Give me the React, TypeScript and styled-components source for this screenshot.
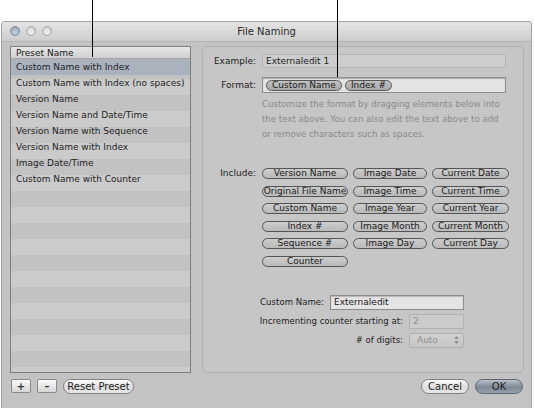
import React from "react";
import styled, { createGlobalStyle } from "styled-components";

const GlobalStyle = createGlobalStyle`
  html, body {
    margin: 0;
    padding: 0;
    background: #ffffff;
  }
  body {
    font-family: "DejaVu Sans", "Liberation Sans", sans-serif;
    font-size: 9px;
    color: #1e1e1e;
  }
`;

const presets = [
  "Custom Name with Index",
  "Custom Name with Index (no spaces)",
  "Version Name",
  "Version Name and Date/Time",
  "Version Name with Sequence",
  "Version Name with Index",
  "Image Date/Time",
  "Custom Name with Counter",
];

const includeTokens = [
  "Version Name", "Image Date", "Current Date",
  "Original File Name", "Image Time", "Current Time",
  "Custom Name", "Image Year", "Current Year",
  "Index #", "Image Month", "Current Month",
  "Sequence #", "Image Day", "Current Day",
  "Counter",
];

const Page = styled.div`
  position: relative;
  width: 534px;
  height: 408px;
  overflow: hidden;
  display: flex;
  flex-direction: column;
  padding-top: 21px;
  box-sizing: border-box;
`;

const Callout = styled.div<{ $x: number; $h: number }>`
  position: absolute;
  top: 0;
  left: ${(p) => p.$x}px;
  width: 1px;
  height: ${(p) => p.$h}px;
  background: #000;
  z-index: 5;
`;

const Window = styled.div`
  margin-left: 1px;
  width: 531px;
  flex: 1;
  display: flex;
  flex-direction: column;
  border: 1px solid #a3a3a3;
  border-bottom: none;
  border-radius: 4px 4px 0 0;
  background: #c3c3c3;
  box-sizing: border-box;
  overflow: hidden;
`;

const TitleBar = styled.div`
  position: relative;
  height: 19px;
  flex: none;
  display: flex;
  align-items: center;
  justify-content: center;
  background: linear-gradient(#e4e4e4, #cdcdcd);
  border-bottom: 1px solid #b5b5b5;
  font-size: 10px;
  color: #2a2a2a;
`;

const Lights = styled.div`
  position: absolute;
  left: 8px;
  top: 4px;
  display: flex;
  gap: 6px;
`;

const Light = styled.span<{ $active?: boolean }>`
  width: 10px;
  height: 10px;
  border-radius: 50%;
  box-sizing: border-box;
  border: 1px solid ${(p) => (p.$active ? "#7d8b9a" : "#a6a6a6")};
  background: ${(p) =>
    p.$active
      ? "radial-gradient(circle at 50% 70%, #c7d2de, #8f9cab)"
      : "radial-gradient(circle at 50% 70%, #f2f2f2, #c9c9c9)"};
`;

const Body = styled.div`
  flex: 1;
  display: flex;
  flex-direction: column;
  padding: 4px 8px 0 8px;
`;

const Content = styled.div`
  display: flex;
  gap: 11px;
  height: 327px;
`;

const List = styled.div`
  width: 181px;
  flex: none;
  border: 1px solid #7e7e7e;
  box-sizing: border-box;
  display: flex;
  flex-direction: column;
  overflow: hidden;
  font-size: 9px;
  background: repeating-linear-gradient(
    #cbcbcb 0px,
    #cbcbcb 16px,
    #c2c2c2 16px,
    #c2c2c2 32px
  );
`;

const ListHeader = styled.div`
  height: 11px;
  flex: none;
  padding-left: 5px;
  display: flex;
  align-items: center;
  background: linear-gradient(#e6e6e6, #d0d0d0);
  border-bottom: 1px solid #a6a6a6;
  color: #1a1a1a;
`;

const ListRows = styled.div`
  flex: 1;
  display: flex;
  flex-direction: column;
`;

const ListRow = styled.div<{ $selected?: boolean }>`
  height: 16px;
  flex: none;
  display: flex;
  align-items: center;
  padding-left: 5px;
  white-space: nowrap;
  background: ${(p) => (p.$selected ? "#aab2bd" : "transparent")};
`;

const Panel = styled.div`
  width: 322px;
  flex: none;
  box-sizing: border-box;
  border: 1px solid #b0b0b0;
  border-radius: 5px;
  background: #c6c6c6;
  padding-top: 7px;
  display: flex;
  flex-direction: column;
`;

const FormRow = styled.div<{ $mt?: number }>`
  display: grid;
  grid-template-columns: 53px 244px;
  column-gap: 6px;
  align-items: center;
  margin-top: ${(p) => p.$mt ?? 0}px;
`;

const Label = styled.div`
  text-align: right;
  white-space: nowrap;
`;

const SmallLabel = styled(Label)`
  font-size: 8.6px;
`;

const Field = styled.div<{ $light?: boolean }>`
  height: 14px;
  box-sizing: border-box;
  border: 1px solid ${(p) => (p.$light ? "#8f8f8f" : "#b4b4b4")};
  background: ${(p) => (p.$light ? "#e3e3e3" : "#cdcdcd")};
  border-radius: ${(p) => (p.$light ? 0 : 2)}px;
  display: flex;
  align-items: center;
  padding-left: 3px;
  gap: 3px;
`;

const FormatField = styled(Field)`
  height: 16px;
  box-shadow: inset 0 1px 1px rgba(0, 0, 0, 0.25);
`;

const Token = styled.span<{ $dark?: boolean }>`
  height: 11px;
  box-sizing: border-box;
  display: inline-flex;
  align-items: center;
  justify-content: center;
  padding: 0 5px;
  border: 1px solid #555;
  border-radius: 6px;
  background: ${(p) =>
    p.$dark ? "linear-gradient(#c2c2c2, #a9a9a9)" : "linear-gradient(#cdcdcd, #b9b9b9)"};
  white-space: nowrap;
  color: #1a1a1a;
  line-height: 1;
`;

const Help = styled.div`
  grid-column: 2;
  color: #8a8a8a;
  line-height: 15px;
  font-size: 8.6px;
  white-space: nowrap;
`;

const IncludeGrid = styled.div`
  display: grid;
  grid-template-columns: 86px 74px 77px;
  column-gap: 5px;
  row-gap: 6.6px;
`;

const IncludeRow = styled(FormRow)`
  align-items: start;
  margin-top: 26px;
`;

const IncludeLabel = styled(Label)`
  line-height: 11px;
`;

const Settings = styled.div`
  margin-top: 28px;
  display: flex;
  flex-direction: column;
  align-items: flex-end;
  padding-right: 59px;
  gap: 4px;
`;

const SettingRow = styled.div`
  display: flex;
  align-items: center;
  gap: 6px;
`;

const Input = styled.div<{ $w: number; $disabled?: boolean }>`
  width: ${(p) => p.$w}px;
  height: 15px;
  box-sizing: border-box;
  border: 1px solid ${(p) => (p.$disabled ? "#b3b3b3" : "#8c8c8c")};
  background: ${(p) => (p.$disabled ? "#cbcbcb" : "#e4e4e4")};
  color: ${(p) => (p.$disabled ? "#8e8e8e" : "#1a1a1a")};
  display: flex;
  align-items: center;
  padding-left: 3px;
  box-shadow: ${(p) => (p.$disabled ? "none" : "inset 0 1px 1px rgba(0,0,0,0.2)")};
`;

const Popup = styled.div`
  width: 55px;
  height: 15px;
  box-sizing: border-box;
  border: 1px solid #afafaf;
  border-radius: 3px;
  background: linear-gradient(#d2d2d2, #c5c5c5);
  color: #8e8e8e;
  display: flex;
  align-items: center;
  justify-content: space-between;
  padding: 0 4px 0 7px;
`;

const Footer = styled.div`
  flex: 1;
  display: flex;
  align-items: flex-start;
  padding-top: 6px;
  padding-left: 1px;
  gap: 6px;
`;

const SquareButton = styled.div`
  width: 20px;
  height: 14px;
  box-sizing: border-box;
  border: 1px solid #8a8a8a;
  border-radius: 2px;
  background: linear-gradient(#fbfbfb, #d6d6d6);
  display: flex;
  align-items: center;
  justify-content: center;
  font-size: 10px;
  font-weight: bold;
  color: #333;
`;

const PillButton = styled.div<{ $w: number; $default?: boolean }>`
  width: ${(p) => p.$w}px;
  height: 15px;
  box-sizing: border-box;
  border: 1px solid ${(p) => (p.$default ? "#5f6770" : "#7f7f7f")};
  border-radius: 8px;
  background: ${(p) =>
    p.$default
      ? "linear-gradient(#b9c1ca, #7e8894 55%, #97a1ad)"
      : "linear-gradient(#fdfdfd, #dcdcdc 55%, #e8e8e8)"};
  display: flex;
  align-items: center;
  justify-content: center;
  font-size: 10px;
  color: #1d1d1d;
`;

const Spacer = styled.div`
  flex: 1;
`;

const StepperArrows = () => (
  <svg width="5" height="8" viewBox="0 0 5 8">
    <path d="M2.5 0 L5 3 L0 3 Z M0 5 L5 5 L2.5 8 Z" fill="#8e8e8e" />
  </svg>
);

export default function App() {
  return (
    <>
      <GlobalStyle />
      <Page>
        <Callout $x={92} $h={57} />
        <Callout $x={337} $h={77} />
        <Window>
          <TitleBar>
            <Lights>
              <Light $active />
              <Light />
              <Light />
            </Lights>
            File Naming
          </TitleBar>
          <Body>
            <Content>
              <List>
                <ListHeader>Preset Name</ListHeader>
                <ListRows>
                  {presets.map((name, i) => (
                    <ListRow key={name} $selected={i === 0}>
                      {name}
                    </ListRow>
                  ))}
                </ListRows>
              </List>
              <Panel>
                <FormRow>
                  <Label>Example:</Label>
                  <Field>Externaledit 1</Field>
                </FormRow>
                <FormRow $mt={9}>
                  <Label>Format:</Label>
                  <FormatField $light>
                    <Token $dark>Custom Name</Token>
                    <Token $dark>Index #</Token>
                  </FormatField>
                </FormRow>
                <FormRow $mt={4}>
                  <Help>
                    Customize the format by dragging elements below into
                    <br />
                    the text above. You can also edit the text above to add
                    <br />
                    or remove characters such as spaces.
                  </Help>
                </FormRow>
                <IncludeRow>
                  <IncludeLabel>Include:</IncludeLabel>
                  <IncludeGrid>
                    {includeTokens.map((t) => (
                      <Token key={t}>{t}</Token>
                    ))}
                  </IncludeGrid>
                </IncludeRow>
                <Settings>
                  <SettingRow>
                    <SmallLabel>Custom Name:</SmallLabel>
                    <Input $w={134}>Externaledit</Input>
                  </SettingRow>
                  <SettingRow>
                    <SmallLabel>Incrementing counter starting at:</SmallLabel>
                    <Input $w={55} $disabled>
                      2
                    </Input>
                  </SettingRow>
                  <SettingRow>
                    <SmallLabel># of digits:</SmallLabel>
                    <Popup>
                      <span>Auto</span>
                      <StepperArrows />
                    </Popup>
                  </SettingRow>
                </Settings>
              </Panel>
            </Content>
            <Footer>
              <SquareButton>+</SquareButton>
              <SquareButton>–</SquareButton>
              <PillButton $w={71}>Reset Preset</PillButton>
              <Spacer />
              <PillButton $w={48}>Cancel</PillButton>
              <PillButton $w={48} $default>
                OK
              </PillButton>
            </Footer>
          </Body>
        </Window>
      </Page>
    </>
  );
}
